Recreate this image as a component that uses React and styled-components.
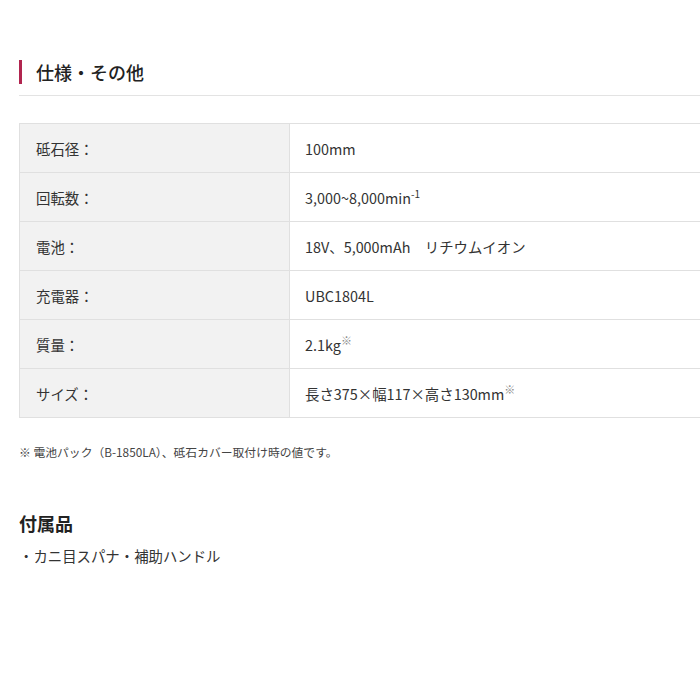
import React from "react";
import styled, { createGlobalStyle } from "styled-components";

const Global = createGlobalStyle`
  html, body { margin: 0; padding: 0; background: #fff; }
  body { font-family: "Noto Sans CJK JP", "Noto Sans", sans-serif; color: #333; }
`;

const Frame = styled.div`
  width: 700px;
  overflow: hidden;
`;

const Page = styled.div`
  padding: 60px 0 0 19px;
  width: 760px;
`;

const HeadingWrap = styled.div`
  border-bottom: 1px solid #e3e3e3;
  padding-bottom: 11px;
`;

const Heading = styled.h2`
  margin: 0;
  border-left: 3px solid #b1254f;
  padding-left: 14px;
  font-size: 18px;
  font-weight: 500;
  line-height: 24px;
  color: #222;
`;

const Table = styled.table`
  margin-top: 27px;
  width: 740px;
  border-collapse: collapse;
  font-size: 14.4px;
`;

const Row = styled.tr`
  height: 49px;
  border-top: 1px solid #e0e0e0;
  border-bottom: 1px solid #e0e0e0;
`;

const Label = styled.th`
  width: 270px;
  box-sizing: border-box;
  background: #f2f2f2;
  text-align: left;
  font-weight: 400;
  padding: 0 16px;
  border-left: 1px solid #e0e0e0;
  border-right: 1px solid #e0e0e0;
  color: #333;
`;

const Value = styled.td`
  padding: 0 15px;
  color: #333;
`;

const Sup = styled.sup`
  font-size: ${(p) => (p.$mark ? "11px" : "10px")};
  color: ${(p) => (p.$mark ? "#888" : "#333")};
  vertical-align: 6px;
  line-height: 0;
`;

const Note = styled.p`
  margin: 26px 0 0;
  font-size: 11.8px;
  line-height: 16px;
  color: #444;
`;

const SubHeading = styled.h3`
  margin: 51px 0 0;
  font-size: 18px;
  font-weight: 700;
  line-height: 24px;
  color: #222;
`;

const Item = styled.p`
  margin: 11px 0 0;
  font-size: 14.4px;
  line-height: 20px;
  color: #333;
`;

const rows = [
  ["砥石径：", "100mm"],
  ["回転数：", <>3,000~8,000min<Sup>-1</Sup></>],
  ["電池：", "18V、5,000mAh　リチウムイオン"],
  ["充電器：", "UBC1804L"],
  ["質量：", <>2.1kg<Sup $mark>※</Sup></>],
  ["サイズ：", <>長さ375×幅117×高さ130mm<Sup $mark>※</Sup></>],
];

export default function App() {
  return (
    <>
      <Global />
      <Frame>
        <Page>
          <HeadingWrap>
            <Heading>仕様・その他</Heading>
          </HeadingWrap>
          <Table>
            <tbody>
              {rows.map(([l, v], i) => (
                <Row key={i}>
                  <Label>{l}</Label>
                  <Value>{v}</Value>
                </Row>
              ))}
            </tbody>
          </Table>
          <Note>※ 電池パック（B-1850LA）、砥石カバー取付け時の値です。</Note>
          <SubHeading>付属品</SubHeading>
          <Item>・カニ目スパナ・補助ハンドル</Item>
        </Page>
      </Frame>
    </>
  );
}
